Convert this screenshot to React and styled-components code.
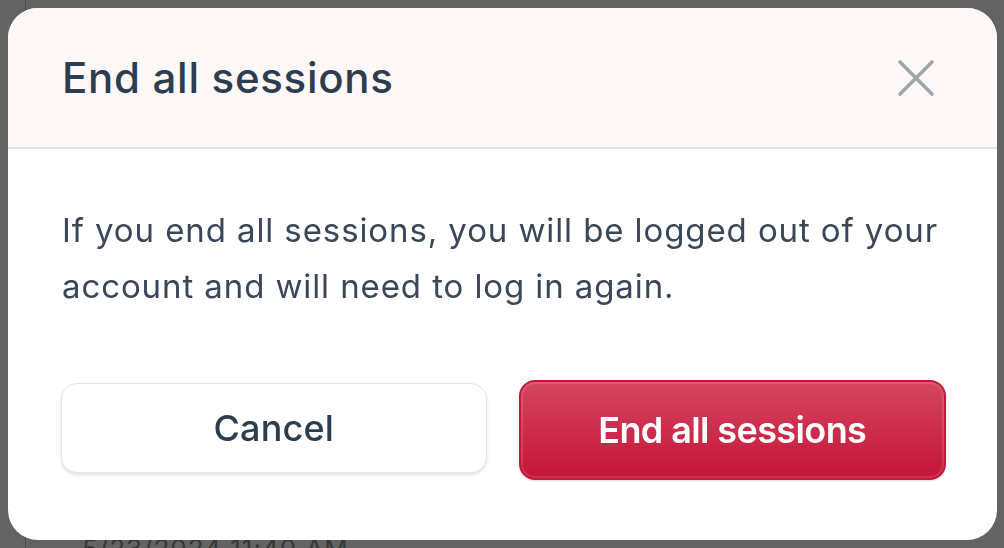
import React from "react";
import styled, { createGlobalStyle } from "styled-components";

const Global = createGlobalStyle`
  html, body {
    margin: 0;
    padding: 0;
    width: 1004px;
    height: 548px;
    overflow: hidden;
    font-family: Inter, "Noto Sans", sans-serif;
  }
  * { box-sizing: border-box; }
`;

const Page = styled.div`
  display: flex;
  width: 1004px;
  height: 548px;
  background: #f8f8f8;
`;

const Rail = styled.div`
  width: 26px;
  border-right: 1px solid #c2c2c2;
`;

const Main = styled.div`
  flex: 1;
  padding: 536px 0 0 56px;
`;

const DateText = styled.div`
  font-size: 26px;
  line-height: 1;
  color: #8a8a8a;
  letter-spacing: 1px;
`;

const Overlay = styled.div`
  position: fixed;
  inset: 0;
  background: rgba(0, 0, 0, 0.6);
  padding: 8px 7px 8px 8px;
  display: flex;
`;

const Dialog = styled.div`
  flex: 1;
  display: flex;
  flex-direction: column;
  background: #ffffff;
  border-radius: 30px;
  overflow: hidden;
`;

const Header = styled.div`
  height: 141px;
  flex: none;
  display: flex;
  align-items: center;
  justify-content: space-between;
  padding: 0 57px 0 54px;
  background: #fff8f8;
  border-bottom: 2px solid #e1e2e6;
`;

const Title = styled.h2`
  margin: 0;
  font-size: 42px;
  font-weight: 500;
  color: #2d3d50;
  letter-spacing: 0.7px;
`;

const CloseButton = styled.button`
  width: 48px;
  height: 48px;
  padding: 0;
  border: none;
  background: transparent;
  display: flex;
  align-items: center;
  justify-content: center;
  color: #9ea6ac;
  cursor: pointer;
`;

const Body = styled.div`
  flex: 1;
  display: flex;
  flex-direction: column;
  padding: 53px 51px 60px 53px;
`;

const Message = styled.p`
  margin: 0 0 0 1px;
  font-size: 33px;
  line-height: 56px;
  font-weight: 400;
  letter-spacing: 0.9px;
  color: #3a4759;
`;

const Actions = styled.div`
  margin-top: auto;
  display: flex;
  align-items: flex-start;
  gap: 32px;
`;

const Button = styled.button`
  flex: 1;
  font-family: inherit;
  font-size: 36px;
  border-radius: 16px;
  cursor: pointer;
  display: flex;
  align-items: center;
  justify-content: center;
  ${(p) =>
    p.$variant === "danger"
      ? `
    height: 100px;
    font-weight: 600;
    letter-spacing: -0.6px;
    color: #ffffff;
    background: linear-gradient(180deg, #d5465f 0%, #c51439 100%);
    border: 2px solid #c8173d;
    box-shadow: inset 0 0 0 2px rgba(255, 255, 255, 0.12), 0 1px 2px rgba(0,0,0,0.15);
  `
      : `
    height: 90px;
    margin-top: 3px;
    font-weight: 500;
    letter-spacing: 0.2px;
    color: #2d3d50;
    background: #ffffff;
    border: 1.5px solid #e4e6ea;
    box-shadow: 0 2px 3px rgba(0, 0, 0, 0.12);
  `}
`;

function XIcon() {
  return (
    <svg width="38" height="38" viewBox="0 0 38 38" fill="none">
      <path
        d="M3 3L35 35M35 3L3 35"
        stroke="currentColor"
        strokeWidth="3.6"
        strokeLinecap="round"
      />
    </svg>
  );
}

export default function App() {
  return (
    <>
      <Global />
      <Page>
        <Rail />
        <Main>
          <DateText>5/23/2024 11:40 AM</DateText>
        </Main>
      </Page>
      <Overlay>
        <Dialog role="dialog" aria-modal="true">
          <Header>
            <Title>End all sessions</Title>
            <CloseButton aria-label="Close">
              <XIcon />
            </CloseButton>
          </Header>
          <Body>
            <Message>
              If you end all sessions, you will be logged out of your account
              and will need to log in again.
            </Message>
            <Actions>
              <Button>Cancel</Button>
              <Button $variant="danger">End all sessions</Button>
            </Actions>
          </Body>
        </Dialog>
      </Overlay>
    </>
  );
}
